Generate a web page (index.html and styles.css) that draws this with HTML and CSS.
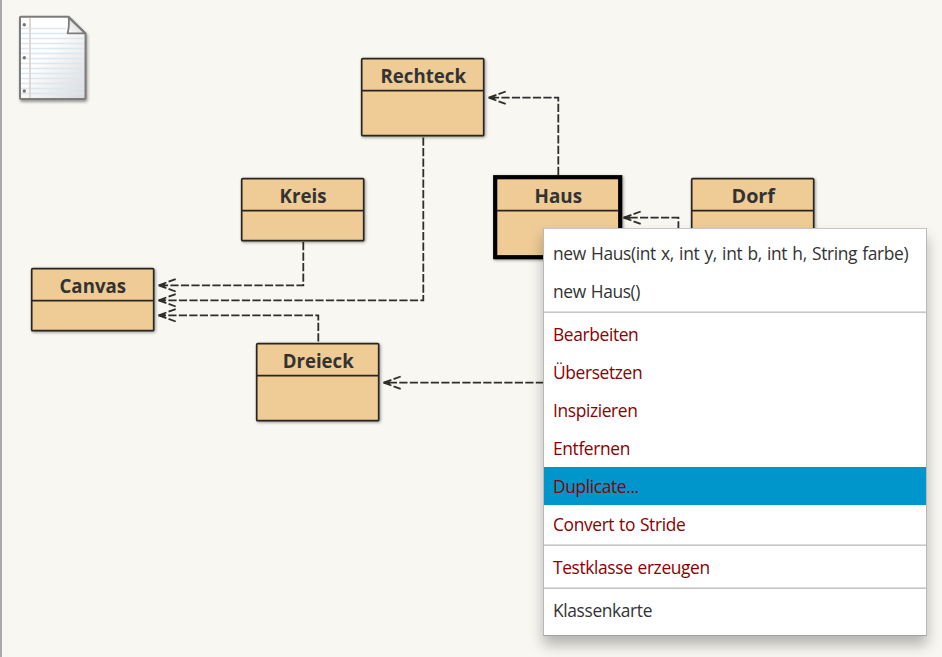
FILE: index.html
```html
<!DOCTYPE html>
<html lang="de">
<head>
<meta charset="utf-8">
<title>Klassendiagramm</title>
<link rel="stylesheet" href="styles.css">
</head>
<body>
<main class="workspace">
<svg class="diagram" width="942" height="657" viewBox="0 0 942 657">
  <defs>
    <linearGradient id="paper" x1="0" y1="0" x2="1" y2="1">
      <stop offset="0.4" stop-color="#ffffff"/>
      <stop offset="1" stop-color="#d9d9dc"/>
    </linearGradient>
    <linearGradient id="fold" x1="0" y1="1" x2="1" y2="0">
      <stop offset="0" stop-color="#ffffff"/>
      <stop offset="1" stop-color="#c8c8c8"/>
    </linearGradient>
    <g id="head">
      <path class="edge" d="M0 0L17 -6.2"/>
      <path class="edge" d="M0 0L17 6.2"/>
      <path class="tip" d="M-.5 0L6.5 -1.8V1.8Z"/>
    </g>
  </defs>

  <g class="note">
    <path class="sheet" d="M20.8 16.8H68.5L85.5 33.5V97.5Q85.5 99 84 99H21.5Q20 99 20 97.5V17.6Q20 16.8 20.8 16.8Z"/>
    <path class="rules" d="M21 28.5H66M21 33.5H66M21 38.5H84M21 43.5H84M21 48.5H84M21 53.5H84M21 58.5H84M21 63.5H84M21 68.5H84M21 73.5H84M21 78.5H84M21 83.5H84M21 88.5H84M21 93.5H84"/>
    <path class="margin" d="M30 18V98"/>
    <path class="corner" d="M68.7 17.5Q69.5 27 67.5 33.3H85Z"/>
    <circle cx="24.3" cy="24.8" r="1.7"/><circle cx="24.3" cy="57.8" r="1.7"/><circle cx="24.3" cy="91" r="1.7"/>
  </g>

  <path class="edge" d="M303.3 242V285.3H158.5"/>
  <path class="edge" d="M423.3 137.5V300.3H158.5"/>
  <path class="edge" d="M318.3 341.5V315.3H158.5"/>
  <path class="edge" d="M558.3 175V97.7H488.5"/>
  <path class="edge" d="M678.4 240V217.7H623.5"/>
  <path class="edge" d="M565 382.7H383.5"/>
  <use href="#head" x="158.7" y="285.3"/>
  <use href="#head" x="158.7" y="300.3"/>
  <use href="#head" x="158.7" y="315.3"/>
  <use href="#head" x="488.7" y="97.7"/>
  <use href="#head" x="623.7" y="217.7"/>
  <use href="#head" x="383.7" y="382.7"/>

  <g class="node"><rect x="361.7" y="58.7" width="122" height="77" rx="1"/><path d="M362 90.6H483.5"/></g>
  <g class="node"><rect x="241.7" y="178.7" width="122" height="62" rx="1"/><path d="M242 210.6H363.5"/></g>
  <g class="node"><rect x="31.7" y="268.7" width="122" height="62" rx="1"/><path d="M32 300.6H153.5"/></g>
  <g class="node"><rect x="256.7" y="343.7" width="122" height="77" rx="1"/><path d="M257 375.6H378.5"/></g>
  <g class="node"><rect x="691.7" y="178.7" width="122" height="62" rx="1"/><path d="M692 210.6H813.5"/></g>
  <g class="node selected"><rect x="495.2" y="177.2" width="125" height="80"/><path d="M497 210.6H618.5"/></g>

  <g class="label">
    <text x="380.5" y="82.6" textLength="85.5" lengthAdjust="spacingAndGlyphs">Rechteck</text>
    <text x="279.5" y="202.6" textLength="47" lengthAdjust="spacingAndGlyphs">Kreis</text>
    <text x="59.5" y="292.6" textLength="66.5" lengthAdjust="spacingAndGlyphs">Canvas</text>
    <text x="282.7" y="367.6" textLength="71" lengthAdjust="spacingAndGlyphs">Dreieck</text>
    <text x="534.5" y="202.6" textLength="47.5" lengthAdjust="spacingAndGlyphs">Haus</text>
    <text x="731.5" y="202.6" textLength="43.5" lengthAdjust="spacingAndGlyphs">Dorf</text>
  </g>
</svg>

<div class="menu">
  <div class="item signature">new Haus(int x, int y, int b, int h, String farbe)</div>
  <div class="item">new Haus()</div>
  <div class="separator"></div>
  <div class="item action">Bearbeiten</div>
  <div class="item action">Übersetzen</div>
  <div class="item action">Inspizieren</div>
  <div class="item action">Entfernen</div>
  <div class="item action active">Duplicate...</div>
  <div class="item action">Convert to Stride</div>
  <div class="separator"></div>
  <div class="item action">Testklasse erzeugen</div>
  <div class="separator"></div>
  <div class="item">Klassenkarte</div>
</div>
</main>
</body>
</html>
```
FILE: styles.css
```css
* { box-sizing: border-box; }
body { margin: 0; background: #f8f7f2; font-family: "Open Sans", "Noto Sans", sans-serif; }
.workspace { position: relative; width: 942px; height: 657px; overflow: hidden; border-left: 2px solid #aaaaac; }
.diagram { display: block; margin-left: -2px; }

.edge { fill: none; stroke: #2e2e2c; stroke-width: 1.8; stroke-dasharray: 8.2 2.3; }
.tip { fill: #2e2e2c; }
.node rect { fill: #efcb95; stroke: #292621; stroke-width: 1.7; }
.node path { fill: none; stroke: #292621; stroke-width: 1.6; }
.node { filter: drop-shadow(1.5px 1.5px 1.5px rgba(0, 0, 0, .4)); }
.node.selected rect { stroke: #000; stroke-width: 4.2; }
.label text { font-size: 18.7px; font-weight: 700; fill: #333; }

.note { filter: drop-shadow(1px 2px 1.5px rgba(0, 0, 0, .4)); }
.sheet { fill: url(#paper); stroke: #7c7c7c; stroke-width: 2; }
.rules { fill: none; stroke: #dce8f0; stroke-width: 1.4; }
.margin { fill: none; stroke: #e0d3d0; stroke-width: 1.8; }
.corner { fill: url(#fold); stroke: #7c7c7c; stroke-width: 1.8; stroke-linejoin: round; }
.note circle { fill: #777; }

.menu {
  position: absolute; left: 541px; top: 228px; width: 384px; height: 408px;
  padding: 5px 0 0; background: #fff;
  border: 1px solid #b8b8b8; border-top-color: #c6c6c6; border-bottom-color: #a2a2a2;
  box-shadow: 0 9px 13px rgba(0, 0, 0, .28);
}
.item { height: 38px; line-height: 38px; padding-left: 9px; font-size: 17.4px; letter-spacing: -.38px; word-spacing: .8px; color: #333; white-space: pre; }
.signature { letter-spacing: -.36px; word-spacing: 1px; }
.action { color: #8b0000; }
.active { background: #0096cc; }
.separator { height: 5px; padding-top: 1px; }
.separator::before { content: ""; display: block; height: 1px; border-top: 1px solid #dedede; background: #c6c6c6; }
```
